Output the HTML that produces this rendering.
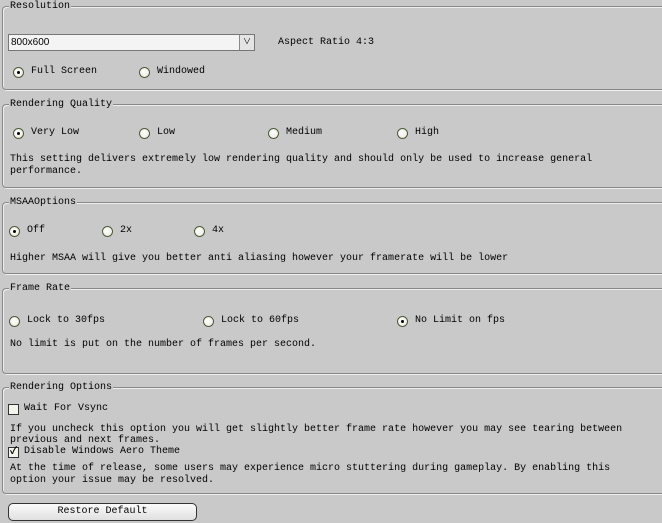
<!DOCTYPE html>
<html><head><style>
body{margin:0;width:662px;height:523px;background:#c9c9c9;font-family:"Liberation Mono","Noto Sans CJK SC",monospace;font-size:10px;color:#000;position:relative;overflow:hidden}
.g{position:absolute;left:2px;width:660px;border:1px solid #888;border-right:none;border-radius:4px 0 0 4px;box-shadow:inset 1px 1px 0 #eee,1px 1px 0 #eee}
.lg{position:absolute;left:6px;top:-6px;background:#c9c9c9;padding:0 1px;line-height:12px}
.t{position:absolute;white-space:nowrap;line-height:14px}
.r{position:absolute;width:11px;height:11px;border-radius:50%;border:1px solid #4a5a3a;background:radial-gradient(circle at 40% 40%,#fff,#e8e8d8);box-sizing:border-box;margin-top:1px}
.r.on::after{content:"";position:absolute;left:3px;top:3px;width:3px;height:3px;background:#000;border-radius:50%}
.c{position:absolute;width:11px;height:11px;border:1px solid #333;background:#f4f4ec;box-sizing:border-box;font-size:10px;line-height:9px;text-align:center;font-weight:bold;margin-top:1px}
</style></head><body>
<div class="g" style="top:6px;height:82px"><div class="lg">Resolution</div></div>
<div style="position:absolute;left:8px;top:34px;width:247px;height:17px;border:1px solid #777;background:#f4f4f4;box-sizing:border-box"><span style="position:absolute;left:2px;top:2px;font-family:'Liberation Sans',sans-serif;font-size:10px">800x600</span><div style="position:absolute;right:0;top:0;width:14px;height:15px;border-left:1px solid #888;background:#e4e4e4;font-size:8px;text-align:center;line-height:15px">&#8744;</div></div>
<div class="t" style="left:278px;top:36px">Aspect Ratio 4:3</div>
<div class="r on" style="left:13px;top:66px"></div><div class="t" style="left:31px;top:65px">Full Screen</div>
<div class="r" style="left:139px;top:66px"></div><div class="t" style="left:157px;top:65px">Windowed</div>

<div class="g" style="top:104px;height:82px"><div class="lg">Rendering Quality</div></div>
<div class="r on" style="left:13px;top:127px"></div><div class="t" style="left:31px;top:126px">Very Low</div>
<div class="r" style="left:139px;top:127px"></div><div class="t" style="left:157px;top:126px">Low</div>
<div class="r" style="left:268px;top:127px"></div><div class="t" style="left:286px;top:126px">Medium</div>
<div class="r" style="left:397px;top:127px"></div><div class="t" style="left:415px;top:126px">High</div>
<div class="t" style="left:10px;top:154px;line-height:12px">This setting delivers extremely low rendering quality and should only be used to increase general<br>performance.</div>

<div class="g" style="top:202px;height:70px"><div class="lg">MSAAOptions</div></div>
<div class="r on" style="left:9px;top:225px"></div><div class="t" style="left:27px;top:224px">Off</div>
<div class="r" style="left:102px;top:225px"></div><div class="t" style="left:120px;top:224px">2x</div>
<div class="r" style="left:194px;top:225px"></div><div class="t" style="left:212px;top:224px">4x</div>
<div class="t" style="left:10px;top:252px">Higher MSAA will give you better anti aliasing however your framerate will be lower</div>

<div class="g" style="top:288px;height:84px"><div class="lg">Frame Rate</div></div>
<div class="r" style="left:9px;top:315px"></div><div class="t" style="left:27px;top:314px">Lock  to 30fps</div>
<div class="r" style="left:203px;top:315px"></div><div class="t" style="left:221px;top:314px">Lock to 60fps</div>
<div class="r on" style="left:397px;top:315px"></div><div class="t" style="left:415px;top:314px">No Limit on fps</div>
<div class="t" style="left:10px;top:338px">No limit is put on the number of frames per second.</div>

<div class="g" style="top:387px;height:105px"><div class="lg">Rendering Options</div></div>
<div class="c" style="left:8px;top:403px"></div><div class="t" style="left:24px;top:402px">Wait For Vsync</div>
<div class="t" style="left:10px;top:424px;line-height:11px">If you uncheck this option you will get slightly better frame rate however you may see tearing between<br>previous and next frames.</div>
<div class="c" style="left:8px;top:446px">&#10003;</div><div class="t" style="left:24px;top:445px">Disable Windows Aero Theme</div>
<div class="t" style="left:10px;top:463px;line-height:12px">At the time of release, some users may experience micro stuttering during gameplay. By enabling this<br>option your issue may be resolved.</div>

<div style="position:absolute;left:8px;top:503px;width:189px;height:18px;border:1px solid #333;border-radius:5px;background:linear-gradient(#fafafa,#e0e0e0);box-sizing:border-box;text-align:center;line-height:16px">Restore Default</div>
</body></html>
